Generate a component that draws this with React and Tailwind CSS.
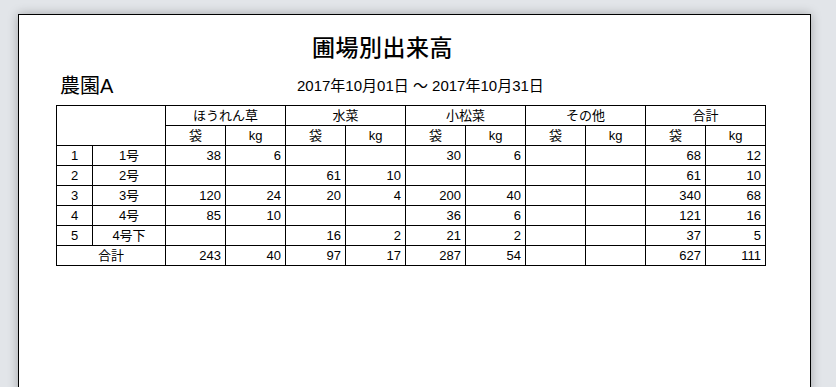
const groups = ["ほうれん草", "水菜", "小松菜", "その他", "合計"];

const rows = [
  ["1", "1号", [38, 6, "", "", 30, 6, "", "", 68, 12]],
  ["2", "2号", ["", "", 61, 10, "", "", "", "", 61, 10]],
  ["3", "3号", [120, 24, 20, 4, 200, 40, "", "", 340, 68]],
  ["4", "4号", [85, 10, "", "", 36, 6, "", "", 121, 16]],
  ["5", "4号下", ["", "", 16, 2, 21, 2, "", "", 37, 5]],
];

const total = [243, 40, 97, 17, 287, 54, "", "", 627, 111];

const font = { fontFamily: '"Liberation Sans", "Noto Sans CJK JP", sans-serif' };

function App() {
  return (
    <div className="h-[387px] w-[836px] overflow-hidden bg-[#e2e5e9] pl-[18px] pt-[14px] text-black" style={font}>
      <div className="h-[400px] w-[793px] border border-black bg-white pt-[18px] shadow-[0_0_10px_rgba(0,0,0,0.28)]">
        {/* title */}
        <div className="ml-[293px] h-[30px] text-[23px] font-medium leading-[30px] tracking-[0.5px]">圃場別出来高</div>

        <div className="mt-[11px] flex h-[24px] items-center">
          <div className="ml-[41px] w-[237px] text-[20px] leading-[24px]">農園A</div>
          <div className="text-[15px] leading-[24px]">2017年10月01日 ～ 2017年10月31日</div>
        </div>

        {/* table */}
        <table className="ml-[37px] mt-[7px] table-fixed border-collapse border border-black text-[13px] leading-[19px]">
          <colgroup>
            <col className="w-[36px]" />
            <col className="w-[73px]" />
            {total.map((_, i) => (
              <col key={i} className="w-[60px]" />
            ))}
          </colgroup>
          <thead>
            <tr className="h-[20px]">
              <th rowSpan={2} colSpan={2} className="border border-black"></th>
              {groups.map((g) => (
                <th key={g} colSpan={2} className="border border-black p-0 text-center font-normal">
                  {g}
                </th>
              ))}
            </tr>
            <tr className="h-[20px]">
              {groups.map((g) => (
                <>
                  <th key={g + "b"} className="border border-black p-0 text-center font-normal">袋</th>
                  <th key={g + "k"} className="border border-black p-0 text-center font-normal">kg</th>
                </>
              ))}
            </tr>
          </thead>
          <tbody>
            {rows.map(([no, name, vals]) => (
              <tr key={no} className="h-[20px]">
                <td className="border border-black p-0 text-center">{no}</td>
                <td className="border border-black p-0 text-center">{name}</td>
                {vals.map((v, i) => (
                  <td key={i} className="border border-black p-0 pr-[4px] text-right">{v}</td>
                ))}
              </tr>
            ))}
            <tr className="h-[20px]">
              <td colSpan={2} className="border border-black p-0 text-center">合計</td>
              {total.map((v, i) => (
                <td key={i} className="border border-black p-0 pr-[4px] text-right">{v}</td>
              ))}
            </tr>
          </tbody>
        </table>
      </div>
    </div>
  );
}

export default App;
